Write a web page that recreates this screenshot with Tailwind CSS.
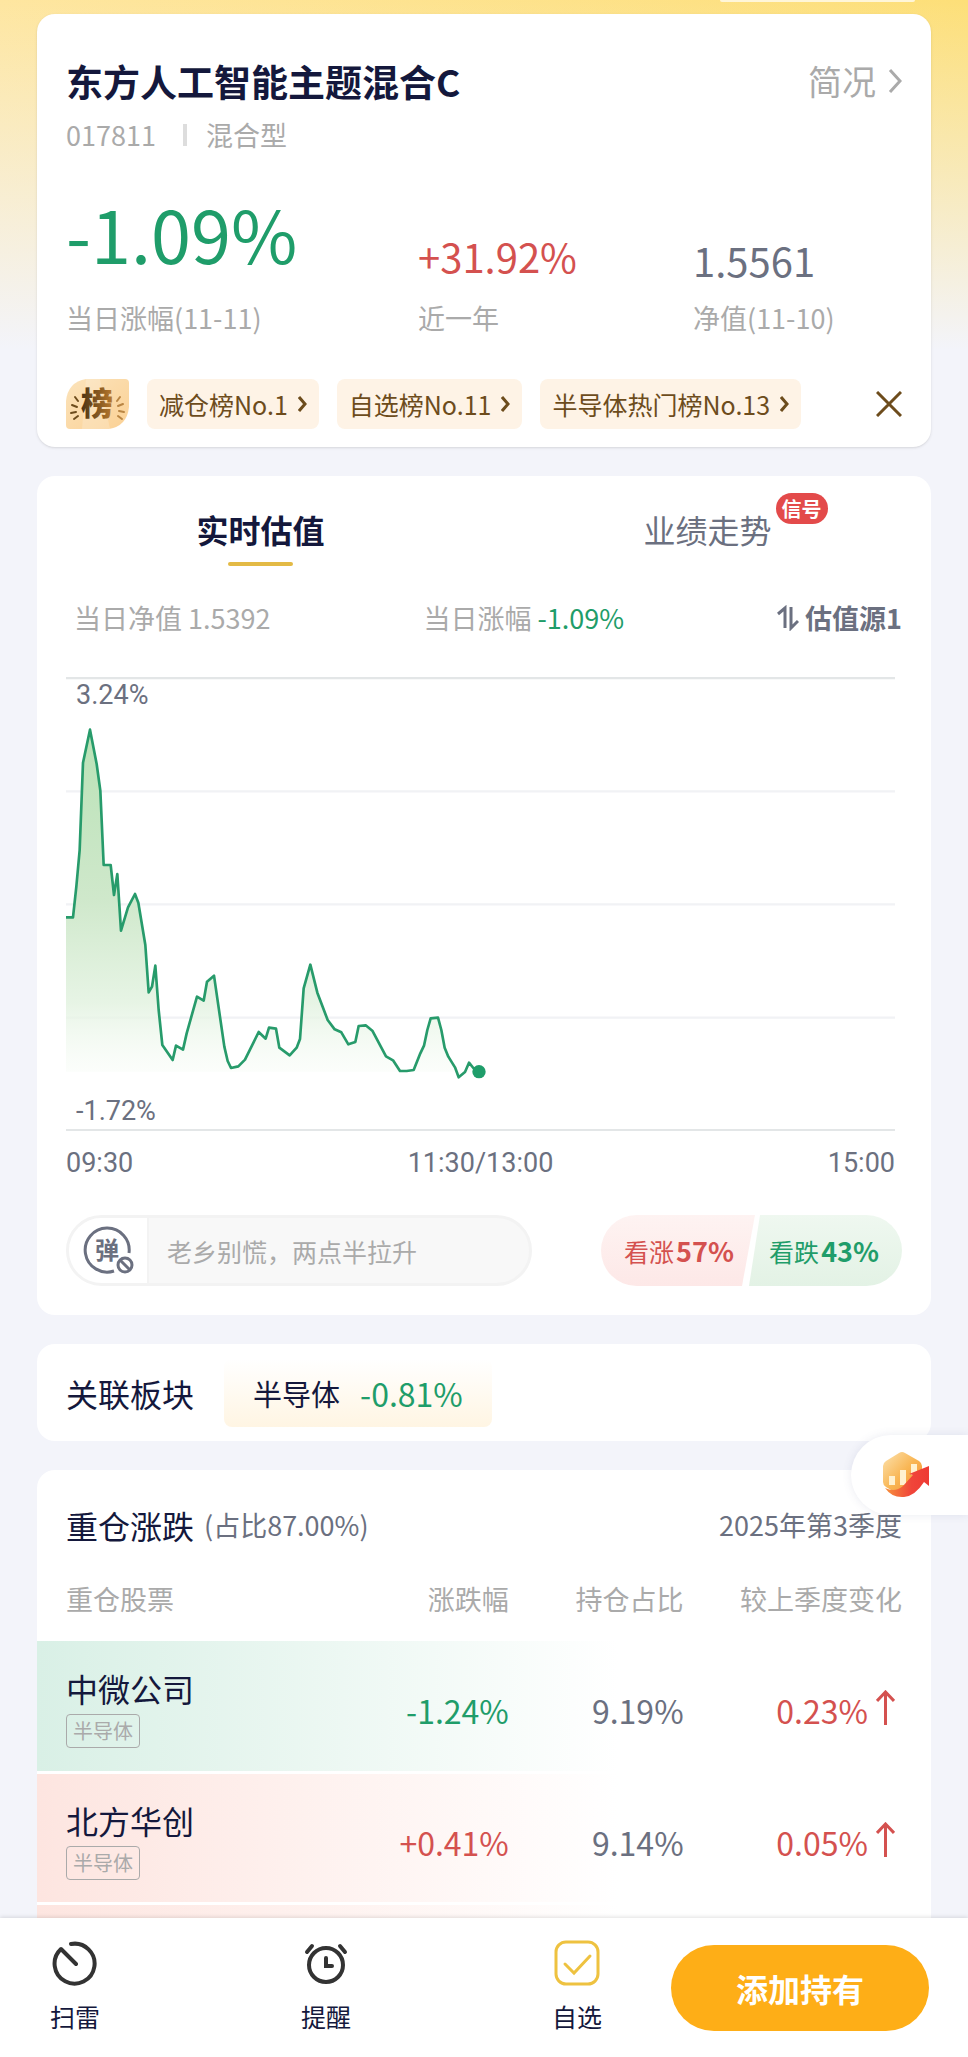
<!DOCTYPE html>
<html lang="zh-CN">
<head>
  <meta charset="UTF-8" />
  <meta name="viewport" content="width=device-width, initial-scale=1.0" />
  <title>东方人工智能主题混合C</title>
  <script src="https://cdn.jsdelivr.net/npm/@tailwindcss/browser@4"></script>
</head>
<body class="h-screen flex flex-col overflow-hidden bg-[#f3f4fa] font-['Noto_Sans_CJK_SC',sans-serif] text-[27px] leading-9 text-[#14183c]">

  <main class="relative flex-1 min-h-0 overflow-hidden px-[37px]">
    <!-- Fondo amarillo -->
    <div class="absolute inset-x-0 top-0 h-[350px] bg-linear-to-r from-[#fee6a0] to-[#fddf78]"></div>
    <div class="absolute inset-x-0 top-0 h-[350px] bg-linear-to-b from-[#f3f4fa]/0 to-[#f3f4fa]"></div>

    <div class="relative">
      <div class="h-0.5 w-[195px] ml-auto mr-4 rounded-b-lg bg-[#fff6d8]"></div>

      <!-- Resumen del fondo -->
      <section class="mt-3 bg-white rounded-[18px] shadow-sm px-[29px] pt-[43px] pb-[18px]">
        <div class="flex items-center justify-between">
          <h1 class="text-[37px] leading-12 font-bold">东方人工智能主题混合C</h1>
          <a href="#" class="flex items-center gap-3 text-[34px] leading-12 text-[#aaaaaa]">简况
            <svg class="w-[14px] h-[26px]" viewBox="0 0 14 26" fill="none" stroke="currentColor" stroke-width="3"><path d="M2 2l10 11L2 24" /></svg>
          </a>
        </div>
        <div class="mt-3 flex items-center text-[#aaaaaa]">
          <span>017811</span>
          <span class="w-1 h-[22px] ml-[27px] mr-[19px] bg-[#dddddd]"></span>
          <span>混合型</span>
        </div>

        <div class="mt-10 grid grid-cols-[352fr_275fr_209fr] items-end text-[#aaaaaa]">
          <div>
            <p class="text-[72px] leading-20 mb-[27px] text-[#1f9d6a]">-1.09%</p>
            <p>当日涨幅(11-11)</p>
          </div>
          <div>
            <p class="text-[40px] leading-12 mb-5 text-[#d4514f]">+31.92%</p>
            <p>近一年</p>
          </div>
          <div>
            <p class="text-[40px] leading-12 mb-4 text-[#6b7080]">1.5561</p>
            <p>净值(11-10)</p>
          </div>
        </div>

        <div class="mt-[43px] flex items-center text-[25px] text-[#6d4c1c]">
          <svg class="w-[63px] h-[50px] shrink-0" viewBox="0 0 63 50">
            <defs>
              <linearGradient id="medalla" x1="0" y1="0" x2="1" y2="1"><stop offset="0" stop-color="#fbe3bb" /><stop offset="1" stop-color="#fbd195" /></linearGradient>
              <linearGradient id="letra"><stop offset="0" stop-color="#4a3314" /><stop offset="1" stop-color="#b9792c" /></linearGradient>
            </defs>
            <path d="M20 0H59Q63 0 63 4V28Q61 47 43 50H4Q0 50 0 46V22Q2 3 20 0Z" fill="url(#medalla)" />
            <path d="M20 0H34L44 50H16Z" fill="#fff" opacity=".2" />
            <g stroke-width="2" stroke-linecap="round">
              <path d="M9 18l3 4M6 26l5 2M5 34l5-1M8 40l4-3" stroke="#6d4c1c" />
              <path d="M54 18l-3 4M57 25l-5 2M58 33l-5-1M56 40l-4-3" stroke="#b98543" />
            </g>
            <text x="15" y="36" font-size="32" font-weight="900" fill="url(#letra)">榜</text>
          </svg>
          <a href="#" class="ml-[18px] h-[50px] px-3 flex items-center gap-2.5 rounded-lg bg-[#fef3e6]">减仓榜No.1
            <svg class="w-[9px] h-4" viewBox="0 0 9 16" fill="none" stroke="currentColor" stroke-width="3"><path d="M1 1l6 7-6 7" /></svg>
          </a>
          <a href="#" class="ml-[18px] h-[50px] px-3 flex items-center gap-2.5 rounded-lg bg-[#fef3e6]">自选榜No.11
            <svg class="w-[9px] h-4" viewBox="0 0 9 16" fill="none" stroke="currentColor" stroke-width="3"><path d="M1 1l6 7-6 7" /></svg>
          </a>
          <a href="#" class="ml-[18px] h-[50px] px-3 flex items-center gap-2.5 rounded-lg bg-[#fef3e6]">半导体热门榜No.13
            <svg class="w-[9px] h-4" viewBox="0 0 9 16" fill="none" stroke="currentColor" stroke-width="3"><path d="M1 1l6 7-6 7" /></svg>
          </a>
          <button type="button" aria-label="关闭" class="ml-auto">
            <svg class="w-[26px] h-[26px]" viewBox="0 0 26 26" fill="none" stroke="currentColor" stroke-width="3"><path d="M1 1l24 24M25 1L1 25" /></svg>
          </button>
        </div>
      </section>

      <!-- Valoración en tiempo real -->
      <section class="mt-[29px] bg-white rounded-[18px] pt-[29px] pb-[29px]">
        <div class="grid grid-cols-2 text-[32px] leading-12">
          <button type="button" class="font-bold flex flex-col items-center gap-[9px]">实时估值
            <span class="w-[65px] h-1 rounded-full bg-[#e3ba45]"></span>
          </button>
          <button type="button" class="flex justify-center text-[#6b7080]">
            <span class="relative">业绩走势
              <span class="absolute left-full -top-3 ml-1 w-[52px] rounded-full bg-[#e34a4a] text-white text-[20px] leading-[31px] font-bold">信号</span>
            </span>
          </button>
        </div>

        <div class="mt-[34px] pl-[37px] pr-[29px] flex justify-between text-[#aaaaaa]">
          <span>当日净值 1.5392</span>
          <span>当日涨幅 <span class="text-[#1f9d6a]">-1.09%</span></span>
          <button type="button" class="flex items-center gap-1.5 font-bold text-[#6b7080]">
            <svg class="w-[22px] h-[26px]" viewBox="0 0 22 26" fill="none" stroke="currentColor" stroke-width="3"><path d="M1 9l7-6v20M14 2v21l7-7" /></svg>
            估值源1
          </button>
        </div>

        <div class="mt-[41px] pl-[29px] pr-9 text-[#6b7080] font-['Roboto',sans-serif]">
          <div class="relative">
            <svg class="block w-full h-auto" viewBox="78 51 2487 1362">
              <defs>
                <linearGradient id="area" gradientUnits="userSpaceOnUse" x1="0" y1="200" x2="0" y2="1235">
                  <stop offset="0" stop-color="#b9e2b6" /><stop offset=".5" stop-color="#cfe8cb" /><stop offset=".8" stop-color="#e4f3e2" stop-opacity=".9" /><stop offset="1" stop-color="#f3faf2" stop-opacity=".3" />
                </linearGradient>
              </defs>
              <path d="M78 394H2565M78 733H2565M78 1073H2565" stroke="#f1f2f5" stroke-width="7" />
              <path d="M78 54H2565M78 1411H2565" stroke="#e3e6e7" stroke-width="8" />
              <path fill="url(#area)" d="M78 772H99L109 680L119 570L129 308L150 209L170 312L181 392L191 615H212L222 705L232 642L243 812L264 742L285 702L295 728L316 855L326 997L336 980L346 917L356 1050L367 1155L398 1200L408 1157L429 1169L440 1120L471 1010L491 1022L501 965L522 947L553 1160L563 1203L573 1224L595 1219L615 1199L656 1116L677 1136L687 1103L708 1106L718 1163L749 1186L770 1163L780 1137L791 985L811 914L832 998L863 1080L884 1108L904 1117L925 1153L946 1146L956 1098L977 1096L997 1112L1038 1189L1059 1201L1080 1233H1100L1121 1230L1141 1180L1152 1157L1162 1110L1172 1075L1194 1073L1204 1110L1214 1163L1225 1190L1245 1222L1256 1252L1275 1236L1287 1208L1300 1224L1317 1235H78Z" />
              <path fill="none" stroke="#279b6b" stroke-width="8" stroke-linejoin="round" d="M78 772H99L109 680L119 570L129 308L150 209L170 312L181 392L191 615H212L222 705L232 642L243 812L264 742L285 702L295 728L316 855L326 997L336 980L346 917L356 1050L367 1155L398 1200L408 1157L429 1169L440 1120L471 1010L491 1022L501 965L522 947L553 1160L563 1203L573 1224L595 1219L615 1199L656 1116L677 1136L687 1103L708 1106L718 1163L749 1186L770 1163L780 1137L791 985L811 914L832 998L863 1080L884 1108L904 1117L925 1153L946 1146L956 1098L977 1096L997 1112L1038 1189L1059 1201L1080 1233H1100L1121 1230L1141 1180L1152 1157L1162 1110L1172 1075L1194 1073L1204 1110L1214 1163L1225 1190L1245 1222L1256 1252L1275 1236L1287 1208L1300 1224L1317 1235" />
              <circle cx="1317" cy="1235" r="20" fill="#1f9d6a" />
            </svg>
            <span class="absolute left-2.5 top-0">3.24%</span>
            <span class="absolute left-2.5 bottom-0.5">-1.72%</span>
          </div>
          <div class="mt-[14px] flex justify-between">
            <span>09:30</span>
            <span>11:30/13:00</span>
            <span>15:00</span>
          </div>
        </div>

        <div class="mt-[34px] px-[29px] flex justify-between text-[25px]">
          <div class="flex w-[466px] h-[71px] rounded-full overflow-hidden border-3 border-[#f3f3f3] bg-[#f8f8f8]">
            <button type="button" aria-label="关闭弹幕" class="w-[80px] shrink-0 pl-3.5 bg-white border-r-2 border-[#f3f3f3]">
              <svg class="w-[52px] h-[50px]" viewBox="0 0 52 50" fill="none" stroke="#6b7080" stroke-width="3">
                <path d="M31 45A22 22 0 1 1 46 27" />
                <circle cx="42" cy="39" r="7" />
                <path d="M37 34l10 10" />
                <text x="12" y="33" font-size="24" font-weight="700" fill="#6b7080" stroke="none">弹</text>
              </svg>
            </button>
            <input type="text" aria-label="弹幕" placeholder="老乡别慌，两点半拉升" class="flex-1 min-w-0 px-[18px] placeholder:text-[#aaaaaa] focus:outline-none" />
          </div>
          <div class="flex">
            <button type="button" class="w-[154px] pl-[23px] text-left rounded-l-full rounded-r-md bg-linear-to-b from-[#fef3f2] to-[#fde8e7] text-[#d4514f] [clip-path:polygon(0_0,100%_0,calc(100%-13px)_100%,0_100%)]">看涨<b class="ml-0.5 text-[27px]">57%</b></button>
            <button type="button" class="-ml-1.5 w-[153px] pr-[23px] text-right rounded-r-full rounded-l-md bg-linear-to-b from-[#eff8f0] to-[#e3f2e5] text-[#1f9d6a] [clip-path:polygon(11px_0,100%_0,100%_100%,0_100%)]">看跌<b class="ml-0.5 text-[27px]">43%</b></button>
          </div>
        </div>
      </section>

      <!-- Sector relacionado -->
      <section class="mt-[29px] bg-white rounded-[18px] h-[97px] px-[29px] flex items-center">
        <h2 class="text-[32px] leading-12">关联板块</h2>
        <a href="#" class="ml-[30px] h-[68px] px-[29px] flex items-center gap-5 rounded-lg bg-linear-to-b from-white to-[#fff5e3] text-[29px]">半导体
          <span class="text-[32px] text-[#1f9d6a]">-0.81%</span>
        </a>
      </section>

      <!-- Principales posiciones -->
      <section class="mt-[29px] bg-white rounded-t-[18px] pt-[35px]">
        <div class="px-[29px] flex items-center justify-between leading-10 text-[#6b7080]">
          <div class="flex items-center gap-2.5">
            <h2 class="text-[32px] text-[#14183c]">重仓涨跌</h2>
            <span>(占比87.00%)</span>
          </div>
          <span>2025年第3季度</span>
        </div>

        <table class="w-full table-fixed text-right text-[32px] text-[#6b7080]">
          <thead>
            <tr class="h-24 text-[27px] text-[#aaaaaa]">
              <th class="w-[28%] pl-[29px] pt-3 text-left font-normal">重仓股票</th>
              <th class="w-[25%] pt-3 pr-0.5 font-normal">涨跌幅</th>
              <th class="w-[20%] pt-3 pr-1.5 font-normal">持仓占比</th>
              <th class="w-[27%] pr-[29px] pt-3 font-normal">较上季度变化</th>
            </tr>
          </thead>
          <tbody>
            <tr class="h-[131px] border-b-3 border-white bg-linear-to-r from-[#d9f0e6] to-white to-65%">
              <td class="pl-[29px] text-left">
                <p class="text-[32px] leading-12 text-[#14183c]">中微公司</p>
                <span class="block w-fit mt-0.5 px-1.5 rounded-sm border border-[#aaaaaa] text-[20px] leading-8 text-[#aaaaaa]">半导体</span>
              </td>
              <td class="pt-2 pr-0.5 text-[#1f9d6a]">-1.24%</td>
              <td class="pt-2 pr-1.5">9.19%</td>
              <td class="pt-2 pr-9 text-[#d4514f]">
                <span class="flex items-center justify-end gap-2">0.23%
                  <svg class="w-[19px] h-9 -mt-1" viewBox="0 0 19 36" fill="none" stroke="currentColor" stroke-width="3"><path d="M1 11l8.500-9L18 11M9.500 2v33" /></svg>
                </span>
              </td>
            </tr>
            <tr class="h-[131px] border-b-3 border-white bg-linear-to-r from-[#fde5e0] to-white to-65%">
              <td class="pl-[29px] text-left">
                <p class="text-[32px] leading-12 text-[#14183c]">北方华创</p>
                <span class="block w-fit mt-0.5 px-1.5 rounded-sm border border-[#aaaaaa] text-[20px] leading-8 text-[#aaaaaa]">半导体</span>
              </td>
              <td class="pt-2 pr-0.5 text-[#d4514f]">+0.41%</td>
              <td class="pt-2 pr-1.5">9.14%</td>
              <td class="pt-2 pr-9 text-[#d4514f]">
                <span class="flex items-center justify-end gap-2">0.05%
                  <svg class="w-[19px] h-9 -mt-1" viewBox="0 0 19 36" fill="none" stroke="currentColor" stroke-width="3"><path d="M1 11l8.500-9L18 11M9.500 2v33" /></svg>
                </span>
              </td>
            </tr>
            <tr class="h-[131px] bg-linear-to-r from-[#fde5e0] to-white to-65%">
              <td colspan="4"></td>
            </tr>
          </tbody>
        </table>
      </section>
    </div>

    <!-- Botón flotante -->
    <button type="button" aria-label="行情" class="absolute right-0 bottom-[403px] w-[117px] h-20 pl-[29px] rounded-l-full bg-white shadow-[0_0_10px_rgba(80,90,140,0.12)]">
      <svg class="w-[50px] h-[50px]" viewBox="0 0 50 50">
        <defs>
          <linearGradient id="hexagono" x1="0" y1="0" x2="1" y2="1"><stop offset="0" stop-color="#fce3b0" /><stop offset=".5" stop-color="#f9b654" /><stop offset="1" stop-color="#f28a2c" /></linearGradient>
          <linearGradient id="flecha"><stop offset="0" stop-color="#f7913c" /><stop offset=".6" stop-color="#f0453a" /><stop offset="1" stop-color="#ee3a33" /></linearGradient>
        </defs>
        <path d="M25 3Q22 1 19 3L6 11Q3 13 3 16V32Q3 35 6 37L18 44Q22 46 26 44L39 36Q42 34 42 31V16Q42 13 39 11Z" fill="url(#hexagono)" />
        <path d="M9 26h6v9H9zM20 20h6v15h-6zM31 14h6v11h-6z" fill="#fff1cf" />
        <path d="M5 38Q15 43 23 36L33 25L29 24L49 16V36L44 32Q35 46 24 47Q12 48 5 38Z" fill="url(#flecha)" />
      </svg>
    </button>
  </main>

  <!-- Barra inferior -->
  <nav class="relative shrink-0 h-[139px] pl-[50px] pr-[39px] flex items-center justify-between bg-white shadow-[0_-1px_4px_rgba(0,0,0,0.12)] text-[25px]">
    <a href="#" class="flex flex-col items-center gap-3 pb-0.5">
      <svg class="w-[46px] h-[46px]" viewBox="0 0 46 46" fill="none" stroke="#333333" stroke-width="4" stroke-linecap="round"><path d="M19 4A20 20 0 1 1 9 9L24 24" stroke-linejoin="round" /></svg>
      扫雷
    </a>
    <a href="#" class="flex flex-col items-center gap-3 pb-0.5">
      <svg class="w-[46px] h-[46px]" viewBox="0 0 46 46" fill="none" stroke="#333333" stroke-width="4" stroke-linecap="round"><circle cx="23" cy="25" r="17" /><path d="M23 18v8h6M4 12l5-6M42 12l-5-6" /></svg>
      提醒
    </a>
    <a href="#" class="flex flex-col items-center gap-3 pb-0.5">
      <svg class="w-[46px] h-[46px]" viewBox="0 0 46 46" fill="none" stroke="#eec240" stroke-width="3" stroke-linecap="round"><rect x="2" y="2" width="42" height="42" rx="10" /><path d="M11 24l9 9 16-17" /></svg>
      自选
    </a>
    <button type="button" class="-ml-[132px] w-[258px] h-[86px] rounded-full bg-[#feae17] text-white text-[32px] font-bold">添加持有</button>
  </nav>

</body>
</html>
